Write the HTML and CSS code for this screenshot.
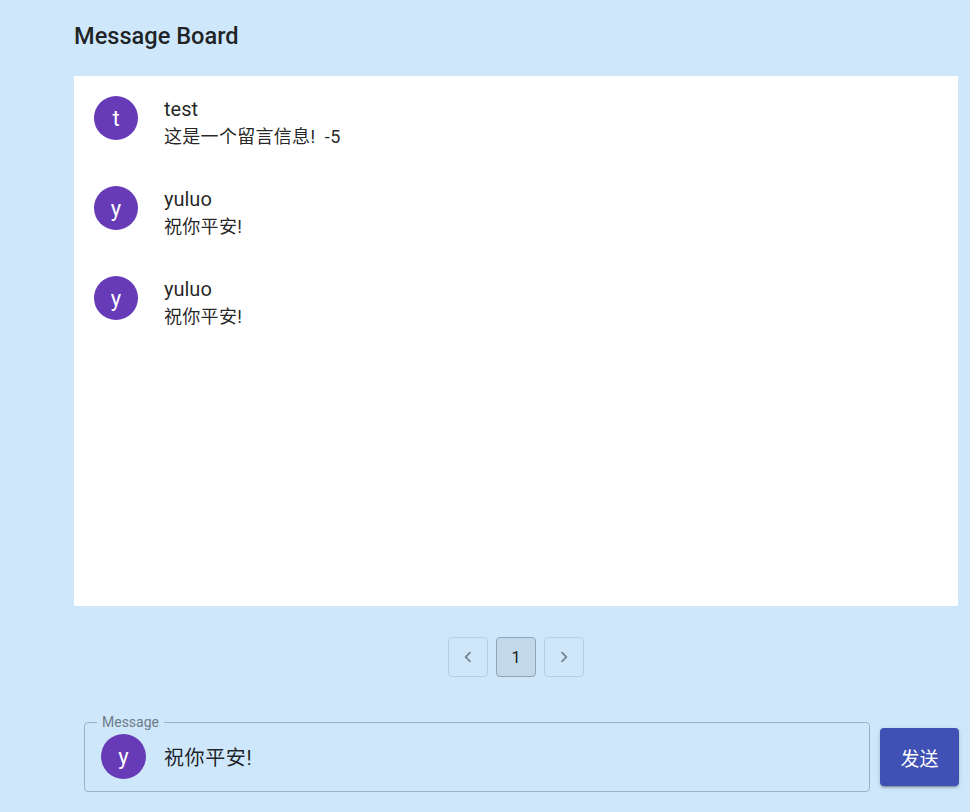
FILE: index.html
```html
<!DOCTYPE html>
<html lang="zh-CN">
<head>
<meta charset="UTF-8">
<meta name="viewport" content="width=device-width, initial-scale=1.0">
<title>Message Board</title>
<link rel="stylesheet" href="styles.css">
</head>
<body>

<div class="container">
  <h1 class="title">Message Board</h1>

  <div class="paper">
    <div class="msg-item">
      <div class="avatar">t</div>
      <div class="msg-text">
        <div class="msg-name">test</div>
        <div class="msg-body">这是一个留言信息!&nbsp;&nbsp;-5</div>
      </div>
    </div>
    <div class="msg-item">
      <div class="avatar">y</div>
      <div class="msg-text">
        <div class="msg-name">yuluo</div>
        <div class="msg-body">祝你平安!</div>
      </div>
    </div>
    <div class="msg-item">
      <div class="avatar">y</div>
      <div class="msg-text">
        <div class="msg-name">yuluo</div>
        <div class="msg-body">祝你平安!</div>
      </div>
    </div>
  </div>

  <div class="pagination">
    <button class="page-btn" disabled>
      <svg width="22" height="22" viewBox="0 0 24 24"><path d="M15.41 7.41 14 6l-6 6 6 6 1.41-1.41L10.83 12z" fill="currentColor"/></svg>
    </button>
    <button class="page-btn selected">1</button>
    <button class="page-btn" disabled>
      <svg width="22" height="22" viewBox="0 0 24 24"><path d="M10 6 8.59 7.41 13.17 12l-4.58 4.59L10 18l6-6z" fill="currentColor"/></svg>
    </button>
  </div>

  <div class="compose">
    <fieldset class="input-box">
      <legend>Message</legend>
      <div class="avatar">y</div>
      <input class="input-text" type="text" value="祝你平安!">
    </fieldset>
    <button class="send-btn">发送</button>
  </div>
</div>

</body>
</html>
```

FILE: styles.css
```css
* {
  margin: 0;
  padding: 0;
  box-sizing: border-box;
}

body {
  background: #cfe7fb;
  color: rgba(0, 0, 0, 0.87);
  font-family: Roboto, "Noto Sans CJK SC", sans-serif;
  min-height: 100vh;
}

.container {
  width: 884px;
  margin-left: 74px;
}

.title {
  font-size: 23.6px;
  font-weight: 500;
  line-height: 32px;
  padding-top: 20px;
  height: 76px;
}

.paper {
  background: #fff;
  height: 530px;
  padding: 19px 20px 0;
}

.msg-item {
  display: flex;
  align-items: flex-start;
  gap: 26px;
  height: 90px;
}

.avatar {
  width: 44px;
  height: 44px;
  border-radius: 50%;
  background: #673ab7;
  color: #fff;
  display: flex;
  align-items: center;
  justify-content: center;
  font-size: 22px;
  flex-shrink: 0;
}

.msg-item .avatar {
  margin-top: 1px;
}

.msg-name {
  font-size: 20px;
  line-height: 28px;
}

.msg-body {
  font-size: 18px;
  line-height: 28px;
  letter-spacing: 0.3px;
}

.pagination {
  display: flex;
  justify-content: center;
  gap: 8px;
  margin-top: 31px;
}

.page-btn {
  width: 40px;
  height: 40px;
  border: 1px solid rgba(0, 0, 0, 0.1);
  border-radius: 4px;
  background: transparent;
  color: rgba(0, 0, 0, 0.42);
  font-family: Roboto, sans-serif;
  font-size: 17px;
  display: flex;
  align-items: center;
  justify-content: center;
}

.page-btn.selected {
  background: #c2d8eb;
  border-color: #93a4b3;
  color: rgba(0, 0, 0, 0.87);
}

.compose {
  display: flex;
  align-items: center;
  gap: 10px;
  margin: 38px -1px 0 10px;
}

.input-box {
  flex: 1;
  height: 77px;
  border: 1px solid #9fb1c2;
  border-radius: 4px;
  padding: 0 16px 0 16px;
  display: flex;
  align-items: center;
  gap: 18px;
}

.input-box legend {
  font-size: 14px;
  color: #6e7c89;
  padding: 0 5px;
  margin-left: -4px;
  line-height: 14px;
}

.input-box .avatar {
  width: 45px;
  height: 45px;
  margin-top: -7px;
}

.input-text {
  flex: 1;
  border: none;
  outline: none;
  background: transparent;
  font-family: Roboto, "Noto Sans CJK SC", sans-serif;
  font-size: 20px;
  letter-spacing: 0.6px;
  color: rgba(0, 0, 0, 0.87);
  margin-top: -7px;
}

.send-btn {
  width: 79px;
  height: 58px;
  margin-top: 7px;
  background: #3f51b5;
  color: #fff;
  border: none;
  border-radius: 4px;
  font-family: Roboto, "Noto Sans CJK SC", sans-serif;
  font-size: 19px;
  box-shadow: 0 3px 1px -2px rgba(0,0,0,0.2), 0 2px 2px 0 rgba(0,0,0,0.14), 0 1px 5px 0 rgba(0,0,0,0.12);
}
```
